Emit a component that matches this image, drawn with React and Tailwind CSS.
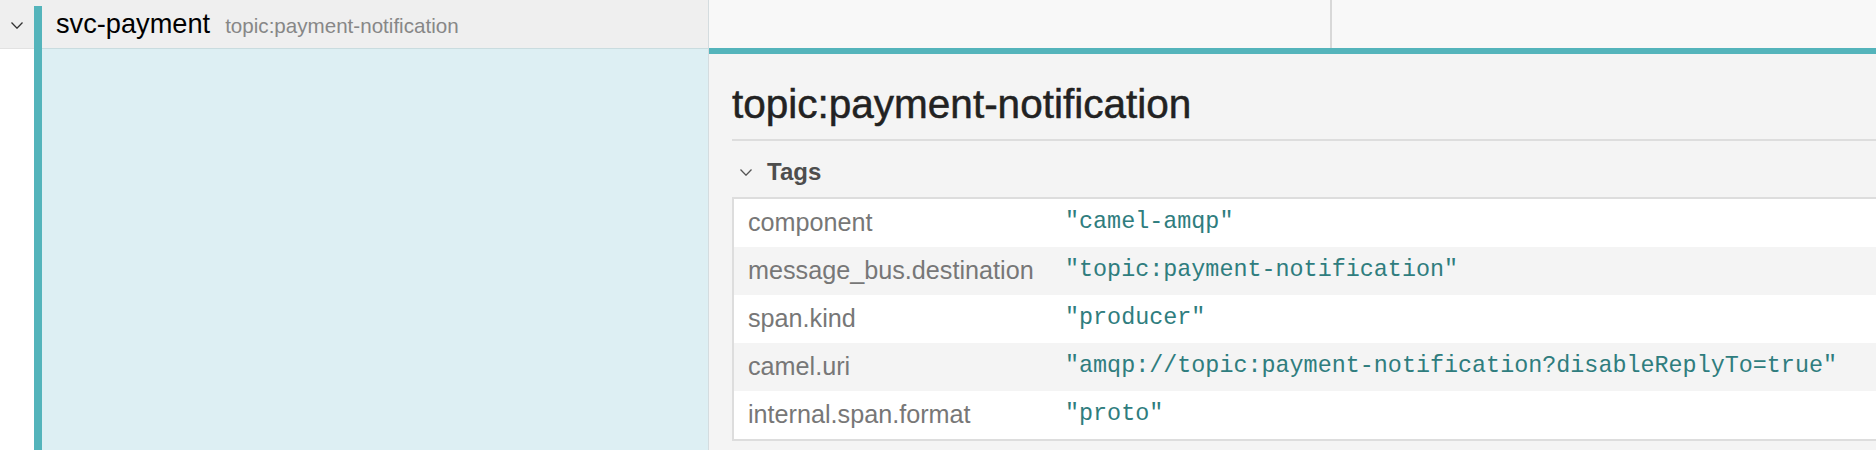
import React from 'react';

const tags = [
  { key: 'component', value: '"camel-amqp"' },
  { key: 'message_bus.destination', value: '"topic:payment-notification"' },
  { key: 'span.kind', value: '"producer"' },
  { key: 'camel.uri', value: '"amqp://topic:payment-notification?disableReplyTo=true"' },
  { key: 'internal.span.format', value: '"proto"' },
];

const Chevron = ({ className }) => (
  <svg viewBox="0 0 12 7" className={className} fill="none" stroke="currentColor" strokeWidth="1.3">
    <path d="M0.5 0.5 L6 6.2 L11.5 0.5" />
  </svg>
);

const App = () => {
  return (
    <div className="flex h-[450px] w-[1876px] overflow-hidden bg-white font-['Liberation_Sans',Arial,sans-serif]">
      {/* Left: span name column */}
      <div className="flex w-[709px] shrink-0 border-r border-[#d4dcdf]">
        {/* Gutter with toggle */}
        <div className="flex w-[34px] flex-col">
          <div className="flex h-[49px] items-center justify-center border-b border-[#e2e2e2] bg-[#efefef] pt-[2px]">
            <Chevron className="h-[7px] w-[12px] text-[#333]" />
          </div>
          <div className="flex-1 bg-white" />
        </div>

        {/* Service color bar */}
        <div className="flex w-[8px] flex-col">
          <div className="h-[6px] bg-[#efefef]" />
          <div className="flex-1 bg-[#54b4bb]" />
        </div>

        <div className="flex flex-1 flex-col">
          <div className="flex h-[49px] items-baseline gap-[15px] border-b border-[#c9dcdf] bg-[#efefef] pl-[14px] pt-[6px]">
            <span className="text-[27.2px] leading-[36px] text-black">svc-payment</span>
            <span className="text-[20.6px] text-[#878787]">topic:payment-notification</span>
          </div>
          <div className="flex-1 bg-[#ddeff3]" />
        </div>
      </div>

      {/* Right: detail panel */}
      <div className="flex flex-1 flex-col overflow-hidden">
        <div className="flex h-[48px] bg-[#f8f8f8]">
          <div className="w-[623px] border-r-2 border-[#d8d8d8]" />
        </div>
        <div className="flex-1 border-t-[6px] border-[#54b4bb] bg-[#f4f4f4] pl-[23px]">
          <h2 className="border-b-2 border-[#dddddd] pb-[11px] pt-[26px] text-[40.5px] leading-[48px] text-[#222] [-webkit-text-stroke:0.5px_#222]">
            topic:payment-notification
          </h2>

          <div className="mt-[16px] flex h-[30px] items-center pl-[8px]">
            <Chevron className="h-[7px] w-[12px] text-[#555]" />
            <span className="ml-[15px] text-[24px] font-bold leading-[30px] text-[#4d4d4d]">Tags</span>
          </div>

          <div className="mt-[10px] border-2 border-r-0 border-[#dddddd] bg-white">
            {tags.map((t, i) => (
              <div
                key={t.key}
                className={`flex h-[48px] items-center ${i % 2 === 1 ? 'bg-[#f4f4f4]' : 'bg-white'}`}
              >
                <div className="w-[331px] shrink-0 pl-[14px] text-[25.2px] text-[#777]">{t.key}</div>
                <div className="whitespace-nowrap font-['Liberation_Mono',monospace] text-[23.4px] text-[#2f7d7e]">
                  {t.value}
                </div>
              </div>
            ))}
          </div>
        </div>
      </div>
    </div>
  );
};

export default App;
